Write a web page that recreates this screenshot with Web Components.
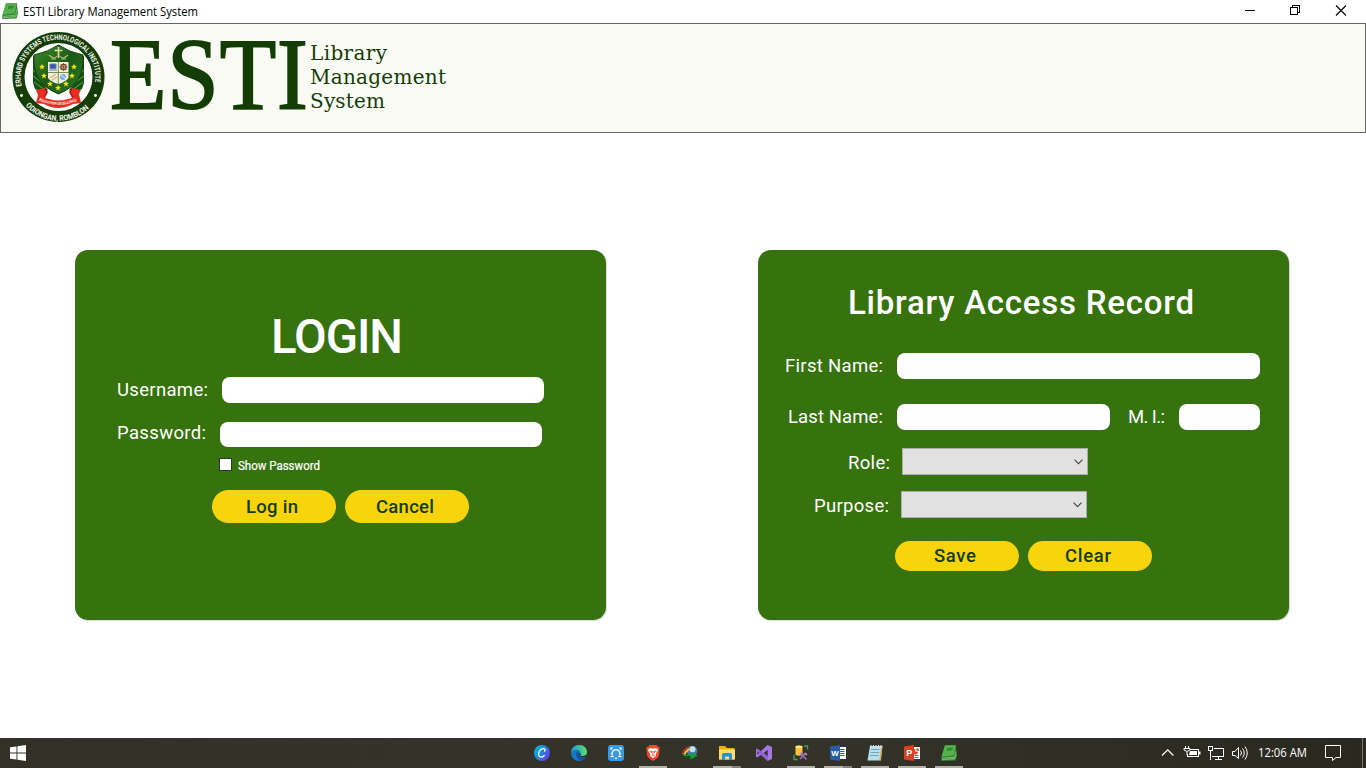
<!DOCTYPE html>
<html lang="en">
<head>
<meta charset="utf-8">
<title>ESTI Library Management System</title>
<style>
html,body{margin:0;height:100%;overflow:hidden;background:#fff;font-family:Roboto,"Liberation Sans",sans-serif}
</style>
</head>
<body>
<esti-app></esti-app>
<script>
const define = (name, html) => {
  const t = document.createElement('template');
  t.innerHTML = html;
  customElements.define(name, class extends HTMLElement {
    constructor() { super(); this.attachShadow({mode: 'open'}).append(t.content.cloneNode(true)); }
  });
};

/* One line of text set to an exact width: w, h (box), b (baseline), size, weight.
   sx scales the glyphs horizontally instead; line thickens them. */
customElements.define('fit-text', class extends HTMLElement {
  connectedCallback() {
    if (this.shadowRoot) return;
    const a = (n, d) => this.getAttribute(n) || d;
    const w = a('w', 50), h = a('h', 26), sx = a('sx', '');
    const fit = sx ? `transform="scale(${sx} 1)"` : `textLength="${w}" lengthAdjust="${a('adjust', 'spacing')}"`;
    this.attachShadow({mode: 'open'}).innerHTML = `<style>:host{display:block;flex:none;width:${w}px;height:${h}px}svg{display:block;overflow:visible}</style>
    <svg width="${w}" height="${h}"><text x="0" y="${a('b', 19)}" fill="currentColor" stroke="currentColor" stroke-width="${a('line', 0)}" font-family="${a('font', 'Roboto')}" font-size="${a('size', 18.5)}" font-weight="${a('weight', 400)}" ${fit}>${a('text', '')}</text></svg>`;
  }
});

define('book-icon', `<style>:host{display:block;flex:none;width:16px;height:16px}svg{display:block}</style>
<svg width="16" height="16" viewBox="0 0 16 16"><path d="M4 .3H14.800L16 10.500 14.500 15.600.300 16 .3 12.800Z" fill="#2b8a32"/><path d="M4 .3H14.800L12.800 10.300.500 11.700Z" fill="#55b04e"/><path d="M6.500 2.800H12L11.300 5.600 5.700 5.900Z" fill="#318b36"/><path d="M1 13.100 13.200 11.800 14.800 5.500 15.300 10.500 13.900 14.200 1.100 14.900Z" fill="#8cc47c"/><path d="M1 14 13.500 13 15 8" stroke="#3b8a3b" fill="none" stroke-width=".6"/></svg>`);

define('title-bar', `<style>
:host{display:flex;height:23px;background:#fff;color:#000;align-items:flex-start}
book-icon{margin:3px 5px 0 2px}.s{flex:1}svg{display:block;flex:none}</style>
<book-icon></book-icon>
<fit-text w="175" h="23" b="16" size="12" font="Open Sans" text="ESTI Library Management System" adjust="spacingAndGlyphs"></fit-text>
<div class="s"></div>
<svg width="121" height="23" viewBox="0 0 121 23" fill="none" stroke="#000"><path d="M0 10.500H10M45.500 7.500H52.500V14.500H45.500ZM47.500 7V5.500H54.500V12.500H53" shape-rendering="crispEdges"/><path d="M91 5.500 101 15.500M101 5.500 91 15.500" stroke-width="1.100"/></svg>`);

define('esti-seal', `<style>:host{display:block;flex:none;width:100px;height:100px}svg{display:block}</style>
<svg width="100" height="100" viewBox="0 0 100 100">
<defs><path id="t" d="M13.800 58A37.300 37.300 0 1 1 85 62"/><path id="u" d="M17.700 77.500A43 43 0 0 0 84.300 76.500"/>
<linearGradient id="g" x1="0" y1="0" x2="1" y2="1"><stop offset="0" stop-color="#3c8b25"/><stop offset=".5" stop-color="#1c5a16"/><stop offset="1" stop-color="#2d8022"/></linearGradient></defs>
<ellipse cx="50.500" cy="49" rx="46" ry="45" fill="#153d09"/><circle cx="50.500" cy="49" r="34" fill="#fff"/>
<g fill="#f3f6ee" font-family="Roboto" font-weight="700" font-size="7.600"><text textLength="131" lengthAdjust="spacingAndGlyphs"><textPath href="#t">ERHARD SYSTEMS TECHNOLOGICAL INSTITUTE</textPath></text><text textLength="71" lengthAdjust="spacingAndGlyphs"><textPath href="#u">ODIONGAN, ROMBLON</textPath></text></g>
<circle cx="13.500" cy="67.500" r="1.400" fill="#fff"/><circle cx="87.500" cy="67.500" r="1.400" fill="#fff"/>
<path d="M25 28 33 31V54L40 62 36 65 27 61 25 55ZM76 28 68 31V54L61 62 65 65 74 61 76 55Z" fill="#174f13"/>
<path d="M26 36 37 46M25 42 39 53M25 48 40 59M26 54 38 63M75 36 64 46M76 42 62 53M76 48 61 59M75 54 63 63" stroke="#44942d" stroke-width="1.300"/>
<path d="M26 27Q40 24 50.500 17 61 24 75 27 76 40 71 50 65 60 50.500 66 36 60 30 50 25 40 26 27Z" fill="url(#g)" stroke="#124010"/>
<path d="M50.500 19V30M46.500 22.500H54.500" stroke="#dfd7a1" stroke-width="1.700"/><path d="M41 27Q46 32 49 28M60 27Q55 32 52 28M43 31H48M53 31H58" stroke="#a8ba75" fill="none" stroke-width="1.200"/>
<path d="M40 34H60.500V50Q57 54 50.500 56 43 54 40 50Z" fill="#f1eedc"/><path d="M50.300 34V56M40 44.500H60.500" stroke="#50733b" stroke-width=".8"/>
<path d="M42 36H48V40.500H42ZM41 42H49" fill="#3159b8" stroke="#637baa"/><circle cx="55.500" cy="39" r="2.700" fill="none" stroke="#7d4324" stroke-width="1.300"/><path d="M55.500 35V43M51.500 39H59.500M52.700 36.200 58.300 41.800M58.300 36.200 52.700 41.800" stroke="#7d4324" stroke-width=".7"/>
<path d="M42 50 48 46M44 52 49 49" stroke="#d8b66a" stroke-width="1.300"/><circle cx="55" cy="49" r="3" fill="#75add8"/><path d="M53 47 58 51" stroke="#eee"/>
<g fill="#ffe01c"><path id="s" d="M34 35.700 34.800 37.800 37 37.900 35.300 39.300 35.900 41.500 34 40.200 32.100 41.500 32.700 39.300 31 37.900 33.200 37.800Z"/><use href="#s" x="32"/><use href="#s" x="2" y="9"/><use href="#s" x="30" y="9"/><use href="#s" x="8" y="17"/><use href="#s" x="24" y="17"/><use href="#s" x="16" y="21"/></g>
<path d="M28 62 37 60 40 64 37 70 41 71Q50 74 60 71L64 70 61 64 64 60 73 62 71 66 73 75 65 76Q50 84 36 76L28 75 30 67Z" fill="#ea2b1f"/><path d="M37 61 39 64 36 69M64 61 62 64 65 69" stroke="#8f1714" fill="none"/>
<path id="r" d="M31 72.500Q50 81 70 72.500" fill="none"/><text fill="#fff" font-family="Roboto" font-weight="700" font-size="3.600" textLength="39" lengthAdjust="spacingAndGlyphs"><textPath href="#r">EDUCATION EXCELLENCE</textPath></text>
</svg>`);

define('brand-header', `<style>
:host{display:flex;box-sizing:border-box;height:110px;border:1px solid #666;background:#fafaf5;color:#133d05;align-items:flex-start}
esti-seal{margin:4px 2px 0 7px}.esti{letter-spacing:1px}.n{margin-left:4px;padding-top:17px}</style>
<esti-seal></esti-seal>
<fit-text class="esti" w="196" h="108" b="84.500" size="101" sx=".915" line="1.800" font="Liberation Serif" text="ESTI"></fit-text>
<div class="n">
<fit-text w="77" h="24" b="18.500" size="20" font="DejaVu Serif" text="Library"></fit-text>
<fit-text w="136" h="24" b="18.500" size="20" font="DejaVu Serif" text="Management"></fit-text>
<fit-text w="75" h="24" b="18.500" size="20" font="DejaVu Serif" text="System"></fit-text></div>`);

define('green-panel', `<style>:host{display:flex;flex-direction:column;flex:none;box-sizing:border-box;width:531px;height:370px;background:#36720e;border-radius:13px;color:#fff;box-shadow:1px 1px 0 #ddd}</style><slot></slot>`);
define('form-row', `<style>:host{display:flex;align-items:flex-start;flex:none}</style><slot></slot>`);
define('text-field', `<style>:host{display:block;flex:none;height:26px;border-radius:8px;background:#fff}</style>`);
define('drop-down', `<style>:host{display:flex;flex:none;box-sizing:border-box;width:186px;height:27px;background:#e1e1e1;border:1px solid #adadad;justify-content:flex-end;align-items:center;padding-right:4px}</style><svg width="9" height="6" viewBox="0 0 9 6" fill="none" stroke="#444" stroke-width="1.100"><path d="M.5.700 4.500 4.700 8.500.700"/></svg>`);
define('check-box', `<style>:host{display:block;flex:none;box-sizing:border-box;width:13px;height:13px;border:1px solid #333;background:#fff}</style>`);
define('pill-button', `<style>:host{display:flex;flex:none;justify-content:center;width:124px;height:33px;border-radius:17px;background:#f8d40d;color:#133d05}</style><slot></slot>`);

define('login-panel', `<style>:host{display:block}</style>
<green-panel>
<form-row style="height:127px;padding-left:196px"><fit-text w="132" h="127" b="103" size="47.500" weight="500" text="LOGIN"></fit-text></form-row>
<form-row style="padding-left:42px"><fit-text w="91" b="19" text="Username:"></fit-text><text-field style="width:322px;margin-left:14px"></text-field></form-row>
<form-row style="padding-left:42px;margin-top:19px;height:25px"><fit-text w="89" h="25" b="17" text="Password:"></fit-text><text-field style="width:322px;height:25px;margin-left:14px"></text-field></form-row>
<form-row style="padding-left:144px;margin-top:11px;height:13px"><check-box></check-box><fit-text style="margin-left:6px" w="82" h="13" b="12" size="12.300" weight="400" line=".2" text="Show Password" adjust="spacingAndGlyphs"></fit-text></form-row>
<form-row style="padding-left:137px;margin-top:19px;gap:9px"><pill-button><fit-text style="margin-right:5px" w="52" b="23" weight="500" text="Log in"></fit-text></pill-button><pill-button><fit-text style="margin-right:4px" w="58" b="23" weight="500" text="Cancel"></fit-text></pill-button></form-row>
</green-panel>`);

define('access-panel', `<style>:host{display:block}</style>
<green-panel>
<form-row style="height:103px;padding-left:90px"><fit-text w="346" h="103" b="64" size="33" weight="500" text="Library Access Record"></fit-text></form-row>
<form-row style="padding-left:27px"><fit-text w="98" text="First Name:"></fit-text><text-field style="width:363px;margin-left:14px"></text-field></form-row>
<form-row style="padding-left:30px;margin-top:25px"><fit-text w="95" text="Last Name:"></fit-text><text-field style="width:213px;margin-left:14px"></text-field><fit-text style="margin-left:18px" w="37" text="M. I.:"></fit-text><text-field style="width:81px;margin-left:14px"></text-field></form-row>
<form-row style="padding-left:90px;margin-top:18px"><fit-text w="42" b="21" text="Role:"></fit-text><drop-down style="margin-left:12px"></drop-down></form-row>
<form-row style="padding-left:56px;margin-top:16px"><fit-text w="75" b="21" text="Purpose:"></fit-text><drop-down style="margin-left:12px"></drop-down></form-row>
<form-row style="padding-left:137px;margin-top:23px;gap:9px"><pill-button style="height:30px"><fit-text style="margin-right:4px" w="42" b="21" weight="500" text="Save"></fit-text></pill-button><pill-button style="height:30px"><fit-text style="margin-right:4px" w="46" b="21" weight="500" text="Clear"></fit-text></pill-button></form-row>
</green-panel>`);

/* Taskbar cell: running="one" or "many" draws the open-window marker */
define('task-item', `<style>
:host{display:flex;flex:none;flex-direction:column;align-items:center;width:37px;height:30px;padding-top:7px;box-sizing:border-box}
::slotted(*){display:block;width:16px;height:16px;flex:none}
i{display:none;width:28px;height:2px;margin-top:5px;background:#b2b0aa}
:host([running]) i{display:block}:host([running=many]) i{background:linear-gradient(90deg,#b2b0aa 19px,#85837c 19px)}</style><slot></slot><i></i>`);

define('task-bar', `<style>
:host{display:flex;height:30px;background:linear-gradient(90deg,#333127,#34332a 60%,#2a2920);color:#fff}
.start{width:523px}.start svg{display:block;margin:7px 0 0 10px}.apps{display:flex;width:481px}.gap{flex:1}.tray{display:flex;width:208px}svg{display:block;flex:none}</style>
<div class="start"><svg width="16" height="16" viewBox="0 0 16 16" fill="#fff"><path d="M0 2.300 6.500 1.400V7.500H0ZM7.400 1.300 16 0V7.500H7.400ZM0 8.500H6.500V14.600L0 13.700ZM7.400 8.500H16V16L7.400 14.700Z"/></svg></div>
<div class="apps">
<task-item><svg viewBox="0 0 16 16"><defs><linearGradient id="c" x1="0" y1=".2" x2="1" y2=".9"><stop stop-color="#00bfd0"/><stop offset=".5" stop-color="#267fdf"/><stop offset="1" stop-color="#7b27e8"/></linearGradient></defs><circle cx="8" cy="8" r="8" fill="url(#c)"/><path d="M10.300 6.500C12 4.800 10.800 3.200 8.700 3.700 5.900 4.400 4 7.600 4.700 10.200 5.500 13 8.700 12.700 10.600 10.100" fill="none" stroke="#fff" stroke-width="1.300"/></svg></task-item>
<task-item><svg viewBox="0 0 16 16"><defs><linearGradient id="e"><stop stop-color="#1e9be0"/><stop offset="1" stop-color="#5fdd62"/></linearGradient></defs><circle cx="8" cy="8" r="8" fill="#1778c8"/><path d="M0 7.500C.5 3 4 0 8.300 0 13 0 16 3.500 16 7 16 10 13.500 11 11 11 9 11 8.800 9.900 9.700 9.100 10.500 7.200 8.500 4.800 5.500 4.800 3 4.800.7 6 0 7.500Z" fill="url(#e)"/><path d="M6.500 6.500C3.500 9 5.500 14.800 11 15.300 13 14.600 14.500 13.200 15 12 11 14 7 11.500 7.500 8 8 6.800 7.300 6 6.500 6.500Z" fill="#11549d"/><path d="M9.800 9.200C8.700 10.100 9.300 11.200 11 11.200 13 11.200 15 10.500 15.700 9.200L15 12C11.500 13.200 7.500 11.500 7.600 8.200Z" fill="#302e26"/></svg></task-item>
<task-item><svg viewBox="0 0 16 16"><rect width="16" height="16" rx="3" fill="#2f9df1"/><path d="M4.500 10.500A4 4 0 1 1 11.500 10.500" fill="none" stroke="#fff" stroke-width="1.300"/><path d="M2.500 11.500H6M10 11.500H13.500M7 13.300H9M3 5V3H5M13 5V3H11" fill="none" stroke="#fff" stroke-width="1.200"/></svg></task-item>
<task-item running="one"><svg viewBox="0 0 16 16"><path d="M4.500 0H11.500L13 1.700 14.700 2 14 10.500 12.500 13 8 16 3.500 13 2 10.500 1.300 2 3 1.700Z" fill="#f3482a"/><path d="M4 3.500 6.500 3.200 8 3.700 9.500 3.200 12 3.500 13 5.500 10.700 9 11 10.700 8 13.200 5 10.700 5.300 9 3 5.500Z" fill="#fff"/><path d="M4.500 6 7 6.600 6.300 8M11.500 6 9 6.600 9.700 8M8 6V10M6.300 10.800 8 10 9.700 10.800" fill="none" stroke="#f3482a" stroke-width=".9"/></svg></task-item>
<task-item><svg viewBox="0 0 16 16"><circle cx="10" cy="6" r="5.300" fill="#4779b4"/><circle cx="10.500" cy="4.300" r="3" fill="#c7def0"/><path d="M.8 9.500Q2 4 7 2" stroke="#d73428" fill="none" stroke-width="1.600"/><path d="M2 10.500Q3.500 6 7.500 4" stroke="#f3d52c" fill="none" stroke-width="1.600"/><path d="M.5 8.500Q.5 12 8.500 10.500V14.500L15.800 10.500 8.500 7.500V9Q4 10.500.5 8.500Z" fill="#10a52a"/><path d="M1 10.500Q3 13 8 12" stroke="#075e29" fill="none"/></svg></task-item>
<task-item running="many"><svg viewBox="0 0 16 16"><path d="M0 1H6L8 3H15.500V14.500H0Z" fill="#f0a91d"/><path d="M0 4.500H16V14.500H0Z" fill="#ffda70"/><path d="M3 15V9.500Q3 8 4.500 8H11.500Q13 8 13 9.500V15H10V11.500H6V15Z" fill="#2990d8"/></svg></task-item>
<task-item><svg viewBox="0 0 16 16"><path d="M11.500 0 16 2V14L11.500 16 4.800 9.700 1.300 12.500 0 11.700V4.300L1.300 3.500 4.800 6.300ZM11.700 4.700 7.700 8 11.700 11.300ZM1.500 6.200V9.800L3.300 8Z" fill="#a677e3" fill-rule="evenodd"/><path d="M0 4.300 1.300 3.500 12 11.300V16H11.500Z" fill="#7443be" opacity=".4"/></svg></task-item>
<task-item running="one"><svg viewBox="0 0 16 16"><path d="M2.500 1.500Q6 0 9.500 1.500V10Q6 11.500 2.500 10Z" fill="#f6c334"/><ellipse cx="6" cy="1.800" rx="3.500" ry="1.300" fill="#ffe889"/><path d="M1 10V14.500H4.500M11 1H14.500V4.500" fill="none" stroke="#42a848" stroke-width="1.300"/><path d="M7 8 13.500 14.500M13 8 7 14" stroke="#9a6db9" stroke-width="1.700"/><path d="M6.500 9 9 7M11.500 8 14 10" stroke="#c09acd" stroke-width="1.300"/></svg></task-item>
<task-item running="many"><svg viewBox="0 0 16 16"><path d="M8 2H16V14H8Z" fill="#fff"/><path d="M10 4.500H14.500M10 6.500H14.500M10 8.500H14.500M10 10.500H14.500" stroke="#285ca8"/><path d="M0 1.500 10 0V16L0 14.500Z" fill="#285ca8"/><text x="1.200" y="11" font-family="Liberation Sans" font-size="8" font-weight="700" fill="#fff" textLength="7.500" lengthAdjust="spacingAndGlyphs">W</text></svg></task-item>
<task-item running="one"><svg viewBox="0 0 16 16"><path d="M3 1H15.500L13.500 15.500H.5Z" fill="#b5dfeb"/><path d="M14.300 1H15.500L14 15.500H12.300Z" fill="#d7ae62"/><path d="M4 4.500H12.500M3.600 7.500H12.200M3 10.500H11.800" stroke="#6fa6bb" stroke-width="1"/><path d="M4 0V2.500M6.500 0V2.500M9 0V2.500M11.500 0V2.500M14 0V2.500" stroke="#e5e8e8"/></svg></task-item>
<task-item running="one"><svg viewBox="0 0 16 16"><path d="M8 2H16V14H8Z" fill="#fff"/><path d="M10.500 10.500H14.500M10.500 12.500H14.500" stroke="#d64324"/><path d="M11.300 4V6.700H14A2.700 2.700 0 1 1 11.300 4M12.500 3A3 3 0 0 1 15.200 5.700H12.500Z" fill="#d64324"/><path d="M0 1.500 10 0V16L0 14.500Z" fill="#d64324"/><text x="2.200" y="11.200" font-family="Liberation Sans" font-size="9" font-weight="700" fill="#fff">P</text></svg></task-item>
<task-item running="one"><book-icon></book-icon></task-item>
</div><div class="gap"></div>
<div class="tray"><svg width="95" height="30" viewBox="0 0 95 30" fill="none" stroke="#fff">
<path d="M4 17.500 9.700 11.800 15.400 17.500" stroke-width="1.200"/>
<path d="M32 11.500H40.500V18.500H29.500V16" shape-rendering="crispEdges"/><path d="M32 13H39V17H31ZM41 13.500H42.500V16.500H41Z" fill="#fff" stroke="none"/><path d="M27.500 8V10.500M30.500 8V10.500M26 10.500H32V12Q29 15 26 12ZM29 14V17"/>
<path d="M56 10.500H65.500V18.500H54M60.500 18.500V21.500M57 21.500H64M50.500 8.500H54.500V12.500H50.500ZM52.500 12.500V21.500" shape-rendering="crispEdges"/>
<path d="M74.500 13.500H77L80.500 9.500V20.500L77 17.500H74.500Z"/><path d="M82.500 12.500Q84.500 15 82.500 17.500M84.500 10.500Q88 15 84.500 19.500M87 8.500Q91.500 15 87 21.500"/></svg>
<fit-text w="49" h="30" b="19" size="12" font="Open Sans" text="12:06 AM" adjust="spacingAndGlyphs" style="margin-left:5px"></fit-text>
<svg width="59" height="30" viewBox="0 0 59 30" fill="none" stroke="#fff"><path d="M18.500 7.500H33.500V19.500H29L25.500 22.500V19.500H18.500Z"/><path d="M55.500 0V30" stroke="#77766f"/></svg></div>`);

define('esti-app', `<style>
:host{display:flex;flex-direction:column;width:1366px;height:768px;background:#fff;overflow:hidden}
title-bar,brand-header,task-bar{flex:none}
main{display:flex;flex:1;align-items:flex-start;gap:152px;padding:117px 0 0 75px}</style>
<title-bar></title-bar><brand-header></brand-header>
<main><login-panel></login-panel><access-panel></access-panel></main>
<task-bar></task-bar>`);
</script>
</body>
</html>
